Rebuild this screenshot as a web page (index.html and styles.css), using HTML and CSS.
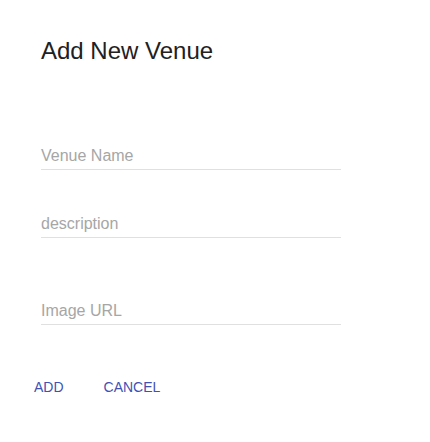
FILE: index.html
```html
<!DOCTYPE html>
<html>
<head>
<meta charset="utf-8">
<link rel="stylesheet" href="styles.css">
</head>
<body>
<div class="dialog">
  <h2 class="title">Add New Venue</h2>
  <div class="fields">
    <div class="field f1"><span class="label">Venue Name</span></div>
    <div class="field f2"><span class="label">description</span></div>
    <div class="field f3"><span class="label">Image URL</span></div>
  </div>
  <div class="actions">
    <button class="btn">ADD</button>
    <button class="btn">CANCEL</button>
  </div>
</div>
</body>
</html>
```
FILE: styles.css
```css
html, body {
  margin: 0;
  padding: 0;
  background: #fff;
}
body {
  font-family: "Liberation Sans", Arial, sans-serif;
}
.dialog {
  width: 430px;
  height: 442px;
  box-sizing: border-box;
  padding-top: 35px;
}
.title {
  margin: 0 0 0 41px;
  font-size: 24px;
  font-weight: 400;
  line-height: 32px;
  color: #212121;
}
.fields {
  margin-left: 41px;
  width: 300px;
  display: flex;
  flex-direction: column;
}
.field {
  border-bottom: 1px solid #e0e0e0;
  padding-bottom: 3px;
}
.f1 { margin-top: 79px; }
.f2 { margin-top: 44px; }
.f3 { margin-top: 63px; }
.label {
  display: block;
  font-size: 16px;
  line-height: 20px;
  color: #a6a6a6;
}
.actions {
  display: flex;
  gap: 40px;
  margin-top: 54px;
  margin-left: 34px;
}
.btn {
  border: 0;
  background: none;
  padding: 0;
  font-family: "Liberation Sans", Arial, sans-serif;
  font-size: 14px;
  line-height: 16px;
  color: #3f51b5;
  cursor: pointer;
}
```
